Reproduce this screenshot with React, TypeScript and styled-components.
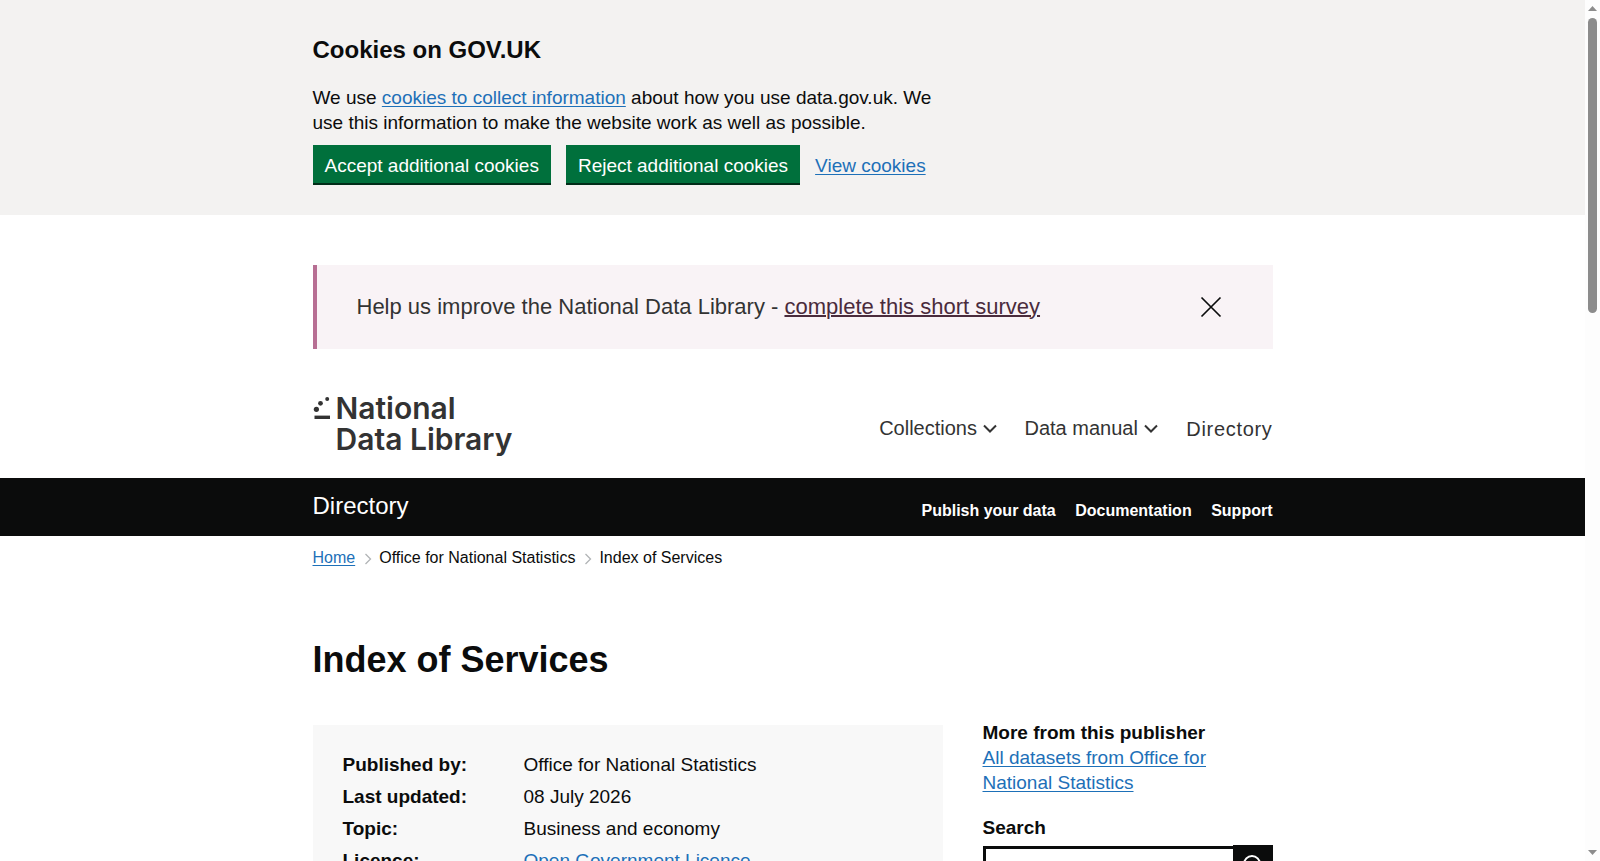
import React from 'react';
import styled, { createGlobalStyle } from 'styled-components';
import { Search } from 'lucide-react';

const GlobalStyle = createGlobalStyle`
  body {
    margin: 0;
    padding-right: 15px;
    font-family: "Liberation Sans", Arial, sans-serif;
    font-size: 19px;
    line-height: 25px;
    color: #0b0c0c;
    background: #fff;
  }
`;

const ScrollBar = styled.div`
  position: fixed;
  top: 0;
  right: 0;
  bottom: 0;
  display: flex;
  flex-direction: column;
  align-items: center;
  width: 15px;
  background: #fdfdfd;
`;

const ScrollArrow = styled.svg<{ $down?: boolean }>`
  display: block;
  flex: none;
  width: 9px;
  height: 5px;
  margin: ${({ $down }) => ($down ? 'auto 0 6px' : '6px 0 0')};
`;

const ScrollThumb = styled.div`
  flex: none;
  width: 9px;
  height: 295px;
  margin-top: 7px;
  border-radius: 5px;
  background: #8c8c8c;
`;

const Container = styled.div`
  width: 960px;
  margin: 0 auto;
`;

const CookieBanner = styled.div`
  background: #f3f2f1;
  padding: 35px 0 30px;
`;

const CookieTitle = styled.h2`
  margin: 0 0 20px;
  font-size: 24px;
  line-height: 30px;
  font-weight: 700;
`;

const CookieText = styled.p`
  width: 630px;
  margin: 0 0 10px;
`;

const Link = styled.a`
  color: #1d70b8;
  text-decoration: underline;
  text-decoration-thickness: 1px;
  text-underline-offset: 2px;
`;

const CookieActions = styled.div`
  display: flex;
  align-items: center;
  gap: 15px;
`;

const GreenButton = styled.button`
  height: 40px;
  padding: 2px 12px 0;
  border: 0;
  border-bottom: 2px solid #002d18;
  background: #00703c;
  color: #fff;
  font: inherit;
`;

const SurveyBanner = styled.div`
  display: flex;
  align-items: center;
  justify-content: space-between;
  box-sizing: border-box;
  height: 84px;
  margin-top: 50px;
  padding: 0 51px 2px 40px;
  border-left: 4px solid #b76e93;
  background: #f9f3f6;
  font-size: 22px;
  color: #333;
`;

const SurveyLink = styled.a`
  color: #4a2b3c;
  text-decoration: underline;
  text-decoration-thickness: 2px;
`;

const CloseIcon = styled.svg`
  display: block;
  width: 22px;
  height: 22px;
  margin-top: 1px;
`;

const Masthead = styled.div`
  display: flex;
  align-items: flex-start;
  justify-content: space-between;
  box-sizing: border-box;
  height: 129px;
  padding-top: 44px;
`;

const Logo = styled.div`
  display: flex;
  gap: 6px;
  font-family: Inter, sans-serif;
  font-size: 30px;
  line-height: 31px;
  font-weight: 600;
  color: #333;
`;

const LogoMark = styled.svg`
  display: block;
  width: 17px;
  height: 24px;
  margin-top: 3px;
`;

const MainNav = styled.nav`
  display: flex;
  align-items: center;
  gap: 27.5px;
  margin-top: 22px;
`;

const NavItem = styled.a<{ $spaced?: boolean }>`
  display: flex;
  align-items: center;
  gap: 6px;
  font-size: 20px;
  letter-spacing: ${({ $spaced }) => ($spaced ? '0.68px' : '0')};
  padding-top: ${({ $spaced }) => ($spaced ? '2px' : '0')};
  margin-left: ${({ $spaced }) => ($spaced ? '1px' : '0')};
  color: #333;
`;

const NavChevron = styled.svg`
  display: block;
  width: 14px;
  height: 9px;
`;

const BlackBar = styled.div`
  background: #0b0c0c;
  color: #fff;
`;

const BlackBarInner = styled(Container)`
  display: flex;
  justify-content: space-between;
  height: 58px;
`;

const BarTitle = styled.div`
  margin-top: 14px;
  font-size: 24px;
  line-height: 28px;
`;

const BarLinks = styled.div`
  display: flex;
  gap: 19.5px;
  margin-top: 20px;
  font-size: 16px;
  font-weight: 700;
`;

const Breadcrumbs = styled.ol`
  display: flex;
  align-items: center;
  margin: 9px 0 0;
  padding: 0;
  list-style: none;
  font-size: 16px;
  line-height: 25px;
`;

const Crumb = styled.li`
  display: flex;
  align-items: center;
`;

const CrumbChevron = styled.svg`
  display: block;
  width: 8px;
  height: 12px;
  margin: 2px 7px 0 9px;
`;

const PageTitle = styled.h1`
  margin: 70px 0 40px;
  font-size: 36px;
  line-height: 40px;
  font-weight: 700;
`;

const Columns = styled.div`
  display: grid;
  grid-template-columns: 630px 290px;
  gap: 40px;
`;

const MetaPanel = styled.div`
  align-self: start;
  margin-top: 5px;
  padding: 27px 30px;
  background: #f8f8f8;
`;

const MetaRow = styled.div`
  display: grid;
  grid-template-columns: 181px 1fr;
  margin-bottom: 7px;
`;

const MetaLabel = styled.div`
  font-weight: 700;
`;

const SideTitle = styled.h3`
  margin: 0;
  font-size: 19px;
  line-height: 25px;
  font-weight: 700;
`;

const Section = styled.div`
  margin-bottom: 20px;
`;

const SearchRow = styled.div`
  display: flex;
  height: 40px;
  margin-top: 5px;
`;

const SearchInput = styled.input`
  flex: 1;
  min-width: 0;
  margin-top: 1px;
  border: 3px solid #0b0c0c;
  box-sizing: border-box;
  border-right: 0;
`;

const SearchButton = styled.button`
  display: flex;
  justify-content: center;
  align-items: center;
  width: 40px;
  border: 0;
  background: #0b0c0c;
  color: #fff;
`;

const meta = [
  { label: 'Published by:', value: 'Office for National Statistics' },
  { label: 'Last updated:', value: '08 July 2026' },
  { label: 'Topic:', value: 'Business and economy' },
];

const App: React.FC = () => (
  <>
    <GlobalStyle />
    <ScrollBar>
      <ScrollArrow viewBox="0 0 9 5" fill="#8c8c8c">
        <path d="M4.5 0L9 5H0z" />
      </ScrollArrow>
      <ScrollThumb />
      <ScrollArrow $down viewBox="0 0 9 5" fill="#8c8c8c">
        <path d="M0 0h9L4.5 5z" />
      </ScrollArrow>
    </ScrollBar>
    <CookieBanner>
      <Container>
        <CookieTitle>Cookies on GOV.UK</CookieTitle>
        <CookieText>
          We use <Link href="#">cookies to collect information</Link> about how you use data.gov.uk. We
          use this information to make the website work as well as possible.
        </CookieText>
        <CookieActions>
          <GreenButton>Accept additional cookies</GreenButton>
          <GreenButton>Reject additional cookies</GreenButton>
          <Link href="#">View cookies</Link>
        </CookieActions>
      </Container>
    </CookieBanner>
    <Container>
      <SurveyBanner>
        <span>
          Help us improve the National Data Library - <SurveyLink href="#">complete this short survey</SurveyLink>
        </span>
        <CloseIcon viewBox="0 0 22 22" fill="none" stroke="#0b0c0c" strokeWidth="1.7">
          <path d="M1.5 1.5l19 19M20.5 1.5l-19 19" />
        </CloseIcon>
      </SurveyBanner>
      <Masthead>
        <Logo>
          <LogoMark viewBox="0 0 17 24" fill="#333">
            <circle cx="14.2" cy="3.1" r="2" />
            <circle cx="7.5" cy="7.3" r="2.4" />
            <circle cx="3.4" cy="13.3" r="2.6" />
            <rect x="1.5" y="19.6" width="15.5" height="3.4" />
          </LogoMark>
          <div>
            National
            <br />
            Data Library
          </div>
        </Logo>
        <MainNav>
          <NavItem>
            Collections
            <NavChevron viewBox="0 0 14 9" fill="none" stroke="#333" strokeWidth="2">
              <path d="M1 1.5l6 6 6-6" />
            </NavChevron>
          </NavItem>
          <NavItem>
            Data manual
            <NavChevron viewBox="0 0 14 9" fill="none" stroke="#333" strokeWidth="2">
              <path d="M1 1.5l6 6 6-6" />
            </NavChevron>
          </NavItem>
          <NavItem $spaced>Directory</NavItem>
        </MainNav>
      </Masthead>
    </Container>
    <BlackBar>
      <BlackBarInner>
        <BarTitle>Directory</BarTitle>
        <BarLinks>
          <span>Publish your data</span>
          <span>Documentation</span>
          <span>Support</span>
        </BarLinks>
      </BlackBarInner>
    </BlackBar>
    <Container>
      <Breadcrumbs>
        <Crumb>
          <Link href="#">Home</Link>
          <CrumbChevron viewBox="0 0 8 12" fill="none" stroke="#b1b4b6" strokeWidth="1.3">
            <path d="M1.5 1l5 5-5 5" />
          </CrumbChevron>
        </Crumb>
        <Crumb>
          Office for National Statistics
          <CrumbChevron viewBox="0 0 8 12" fill="none" stroke="#b1b4b6" strokeWidth="1.3">
            <path d="M1.5 1l5 5-5 5" />
          </CrumbChevron>
        </Crumb>
        <Crumb>Index of Services</Crumb>
      </Breadcrumbs>
      <PageTitle>Index of Services</PageTitle>
      <Columns>
        <MetaPanel>
          {meta.map((row) => (
            <MetaRow key={row.label}>
              <MetaLabel>{row.label}</MetaLabel>
              <div>{row.value}</div>
            </MetaRow>
          ))}
          <MetaRow>
            <MetaLabel>Licence:</MetaLabel>
            <div>
              <Link href="#">Open Government Licence</Link>
            </div>
          </MetaRow>
        </MetaPanel>
        <div>
          <Section>
            <SideTitle>More from this publisher</SideTitle>
            <Link href="#">All datasets from Office for National Statistics</Link>
          </Section>
          <Section>
            <SideTitle>Search</SideTitle>
            <SearchRow>
              <SearchInput aria-label="Search" />
              <SearchButton aria-label="Search">
                <Search size={24} />
              </SearchButton>
            </SearchRow>
          </Section>
        </div>
      </Columns>
    </Container>
  </>
);

export default App;
